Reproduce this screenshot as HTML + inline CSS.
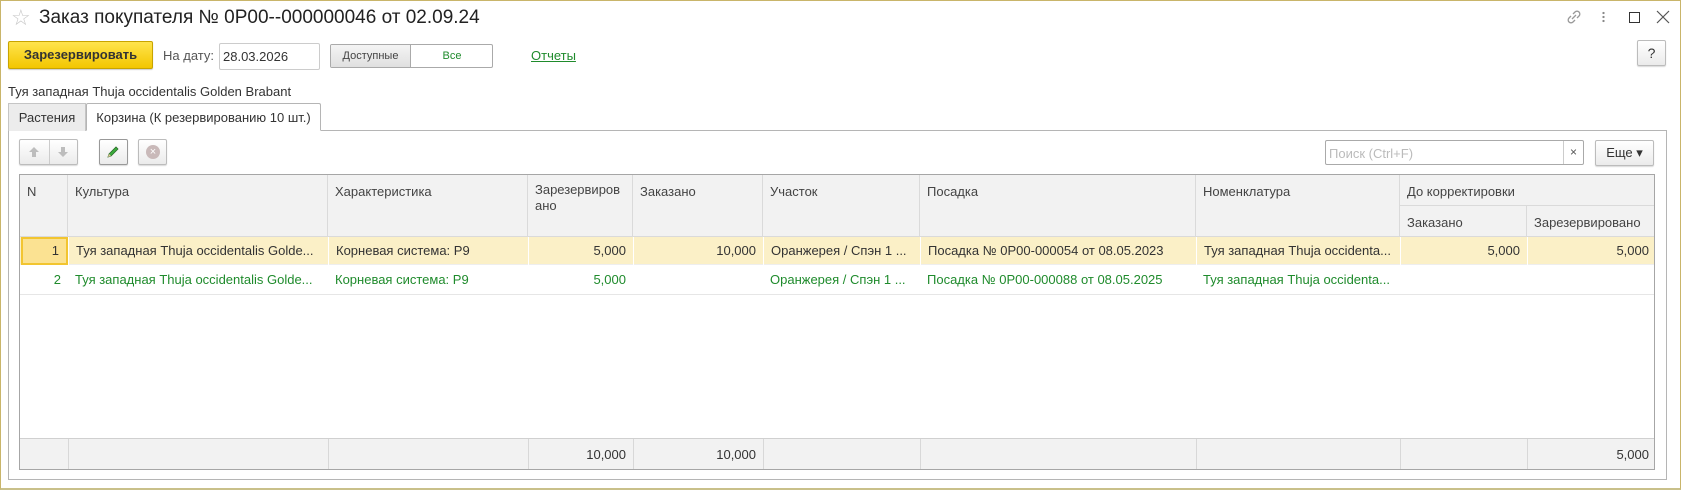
<!DOCTYPE html>
<html><head><meta charset="utf-8"><style>
*{box-sizing:border-box;margin:0;padding:0}
body{width:1681px;height:490px;background:#fff;font-family:"Liberation Sans",Arial,sans-serif;font-size:13px;color:#333;position:relative;overflow:hidden}
.a{position:absolute}
.win{left:0;top:0;width:1681px;height:490px;border:1px solid #c9b56a;border-bottom:2px solid #c9c08a}
.btn{background:linear-gradient(#fff,#ebebeb);border:1px solid #bcbcbc;border-radius:2px;box-shadow:0 1px 1px rgba(0,0,0,.15)}
.c{position:absolute;overflow:hidden;white-space:nowrap;padding:0 7px}
.h{background:#f2f2f2;border-right:1px solid #dadada;border-bottom:1px solid #dadada;color:#444;padding:9px 7px 0}
.r{text-align:right}
.g{color:#1f8b2c}
.v{position:absolute;top:0;width:1px;height:31px;background:#d8d8d8}
</style></head><body>
<div class="a win"></div>
<!-- title -->
<div class="a" style="left:11px;top:5px;font-size:22px;color:#c8c8c8">☆</div>
<div class="a" style="left:39px;top:7px;font-size:19px;color:#222">Заказ покупателя № 0P00--000000046 от 02.09.24</div>
<svg class="a" style="left:1565px;top:8px" width="18" height="18" viewBox="0 0 18 18" fill="none" stroke="#999" stroke-width="1.3"><path d="M8 6l2-2a2.8 2.8 0 014 4l-2 2M10 12l-2 2a2.8 2.8 0 01-4-4l2-2M7 11l4-4"/></svg>
<div class="a" style="left:1602px;top:11px;width:3px;height:12px;background:radial-gradient(circle,#888 1px,transparent 1.3px) 0 0/3px 4px"></div>
<div class="a" style="left:1629px;top:12px;width:11px;height:11px;border:1.5px solid #333"></div>
<svg class="a" style="left:1656px;top:10px" width="14" height="14"><path d="M1 1l12 12M13 1L1 13" stroke="#555" stroke-width="1.2"/></svg>
<!-- toolbar -->
<div class="a" style="left:8px;top:41px;width:145px;height:28px;background:linear-gradient(#ffe44d,#f3c600);border:1px solid #c8a400;border-radius:2px;font-weight:bold;color:#333;text-align:center;line-height:26px;box-shadow:0 1px 1px rgba(0,0,0,.2)">Зарезервировать</div>
<div class="a" style="left:163px;top:48px;color:#555">На дату:</div>
<div class="a" style="left:219px;top:43px;width:101px;height:27px;border:1px solid #ccc;border-radius:2px;padding:5px 3px">28.03.2026</div>
<div class="a" style="left:330px;top:44px;width:163px;height:24px;border:1px solid #aaa;border-radius:2px;font-size:11px;overflow:hidden">
<div class="a" style="left:0;top:0;width:80px;height:22px;background:linear-gradient(#f4f4f4,#e0e0e0);border-right:1px solid #aaa;text-align:center;line-height:22px;color:#444">Доступные</div>
<div class="a g" style="left:80px;top:0;width:82px;height:22px;text-align:center;line-height:22px">Все</div></div>
<div class="a g" style="left:531px;top:48px;text-decoration:underline">Отчеты</div>
<div class="a btn" style="left:1637px;top:40px;width:29px;height:26px;text-align:center;line-height:24px;font-size:14px">?</div>
<div class="a" style="left:8px;top:84px;color:#333">Туя западная Thuja occidentalis Golden Brabant</div>
<!-- tabs -->
<div class="a" style="left:8px;top:130px;width:1659px;height:350px;border:1px solid #b5b5b5"></div>
<div class="a" style="left:8px;top:103px;width:78px;height:28px;background:#ececec;border:1px solid #c5c5c5;border-bottom:none;text-align:center;line-height:27px">Растения</div>
<div class="a" style="left:86px;top:103px;width:235px;height:28px;background:#fff;border:1px solid #b5b5b5;border-bottom:1px solid #fff;border-radius:2px 2px 0 0;text-align:center;line-height:27px">Корзина (К резервированию 10 шт.)</div>
<!-- table toolbar -->
<div class="a btn" style="left:19px;top:139px;width:59px;height:26px"></div>
<div class="a" style="left:49px;top:140px;width:1px;height:24px;background:#ccc"></div>
<svg class="a" style="left:28px;top:146px" width="12" height="12"><path d="M6 1L1 6h3v5h4V6h3z" fill="#bdbdbd"/></svg>
<svg class="a" style="left:57px;top:146px" width="12" height="12"><path d="M6 11L1 6h3V1h4v5h3z" fill="#bdbdbd"/></svg>
<div class="a btn" style="left:99px;top:139px;width:29px;height:26px;border-color:#999"></div>
<svg class="a" style="left:106px;top:145px" width="14" height="14"><path d="M2 12l1-3 7-7 2 2-7 7z" fill="#3cae3c" stroke="#2c6b2c" stroke-width=".8"/><path d="M2 12l1-3 2 2z" fill="#e7c89a"/></svg>
<div class="a btn" style="left:138px;top:139px;width:29px;height:26px"></div>
<div class="a" style="left:146px;top:145px;width:14px;height:14px;border-radius:50%;background:#c9b9b9;color:#fff;font-size:11px;text-align:center;line-height:14px">×</div>
<div class="a" style="left:1325px;top:140px;width:259px;height:25px;border:1px solid #aaa;border-radius:2px;color:#bbb;padding:5px 3px">Поиск (Ctrl+F)</div>
<div class="a" style="left:1563px;top:141px;width:1px;height:23px;background:#ccc"></div>
<div class="a" style="left:1570px;top:145px;font-size:12px;color:#555">×</div>
<div class="a btn" style="left:1595px;top:140px;width:59px;height:26px;text-align:center;line-height:24px">Еще ▾</div>
<!-- table -->
<div class="a" style="left:19px;top:174px;width:1636px;height:296px;border:1px solid #a6a6a6;overflow:hidden">
<div class="c h" style="left:0;top:0;width:48px;height:62px">N</div>
<div class="c h" style="left:48px;top:0;width:260px;height:62px">Культура</div>
<div class="c h" style="left:308px;top:0;width:200px;height:62px">Характеристика</div>
<div class="c h" style="left:508px;top:0;width:105px;height:62px;white-space:normal;line-height:16px;padding-top:7px">Зарезервиров ано</div>
<div class="c h" style="left:613px;top:0;width:130px;height:62px">Заказано</div>
<div class="c h" style="left:743px;top:0;width:157px;height:62px">Участок</div>
<div class="c h" style="left:900px;top:0;width:276px;height:62px">Посадка</div>
<div class="c h" style="left:1176px;top:0;width:204px;height:62px">Номенклатура</div>
<div class="c h" style="left:1380px;top:0;width:256px;height:31px">До корректировки</div>
<div class="c h" style="left:1380px;top:31px;width:127px;height:31px;padding-top:9px">Заказано</div>
<div class="c h" style="left:1507px;top:31px;width:129px;height:31px;padding-top:9px">Зарезервировано</div>
<!-- row1 -->
<div class="a" style="left:0;top:62px;width:1636px;height:28px;background:#fbf0c7;border-bottom:1px solid #eee"></div>
<div class="c r" style="left:1px;top:62px;width:47px;height:28px;background:#fbe292;border:2px solid #f2c530;line-height:24px">1</div>
<div class="c" style="left:48px;top:62px;width:260px;line-height:28px;border-left:1px solid #fff">Туя западная Thuja occidentalis Golde...</div>
<div class="c" style="left:308px;top:62px;width:200px;line-height:28px;border-left:1px solid #fff">Корневая система: P9</div>
<div class="c r" style="left:508px;top:62px;width:105px;line-height:28px;border-left:1px solid #fff">5,000</div>
<div class="c r" style="left:613px;top:62px;width:130px;line-height:28px;border-left:1px solid #fff">10,000</div>
<div class="c" style="left:743px;top:62px;width:157px;line-height:28px;border-left:1px solid #fff">Оранжерея / Спэн 1 ...</div>
<div class="c" style="left:900px;top:62px;width:276px;line-height:28px;border-left:1px solid #fff">Посадка № 0P00-000054 от 08.05.2023</div>
<div class="c" style="left:1176px;top:62px;width:204px;line-height:28px;border-left:1px solid #fff">Туя западная Thuja occidenta...</div>
<div class="c r" style="left:1380px;top:62px;width:127px;line-height:28px;border-left:1px solid #fff">5,000</div>
<div class="c r" style="left:1507px;top:62px;width:129px;line-height:28px;border-left:1px solid #fff">5,000</div>
<!-- row2 -->
<div class="a" style="left:0;top:90px;width:1636px;height:30px;border-bottom:1px solid #e6e6e6"></div>
<div class="c r g" style="left:0;top:90px;width:48px;line-height:30px">2</div>
<div class="c g" style="left:48px;top:90px;width:260px;line-height:30px">Туя западная Thuja occidentalis Golde...</div>
<div class="c g" style="left:308px;top:90px;width:200px;line-height:30px">Корневая система: P9</div>
<div class="c r g" style="left:508px;top:90px;width:105px;line-height:30px">5,000</div>
<div class="c g" style="left:743px;top:90px;width:157px;line-height:30px">Оранжерея / Спэн 1 ...</div>
<div class="c g" style="left:900px;top:90px;width:276px;line-height:30px">Посадка № 0P00-000088 от 08.05.2025</div>
<div class="c g" style="left:1176px;top:90px;width:204px;line-height:30px">Туя западная Thuja occidenta...</div>
<!-- footer -->
<div class="a" style="left:0;top:263px;width:1636px;height:33px;background:#f2f2f2;border-top:1px solid #d0d0d0">
<div class="v" style="left:48px"></div><div class="v" style="left:308px"></div><div class="v" style="left:508px"></div><div class="v" style="left:613px"></div><div class="v" style="left:743px"></div><div class="v" style="left:900px"></div><div class="v" style="left:1176px"></div><div class="v" style="left:1380px"></div><div class="v" style="left:1507px"></div>
<div class="c r" style="left:508px;top:0;width:105px;line-height:31px">10,000</div>
<div class="c r" style="left:613px;top:0;width:130px;line-height:31px">10,000</div>
<div class="c r" style="left:1507px;top:0;width:129px;line-height:31px">5,000</div>
</div>
</div>
</body></html>
